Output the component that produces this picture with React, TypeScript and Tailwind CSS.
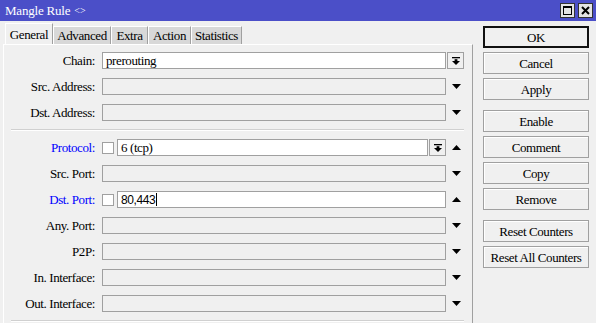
import React from 'react';

const DownArrow: React.FC = () => (
  <svg width="9" height="5" viewBox="0 0 9 5" className="block">
    <polygon points="0,0 9,0 4.5,5" fill="#000" />
  </svg>
);

const UpArrow: React.FC = () => (
  <svg width="9" height="5" viewBox="0 0 9 5" className="block">
    <polygon points="0,5 9,5 4.5,0" fill="#000" />
  </svg>
);

const DropButton: React.FC<{ className?: string }> = ({ className = '' }) => (
  <div
    className={`flex h-[17px] w-[17px] items-center justify-center border border-[#a0a0a0] bg-[#f0f0f0] ${className}`}
  >
    <svg width="8" height="8" viewBox="0 0 8 8" className="block">
      <rect x="0" y="0" width="8" height="1.3" fill="#000" />
      <rect x="2.6" y="2.2" width="2.8" height="2" fill="#000" />
      <polygon points="0,4 8,4 4,8" fill="#000" />
    </svg>
  </div>
);

type RowProps = {
  label: string;
  blue?: boolean;
  children: React.ReactNode;
  trail?: React.ReactNode;
};

const Row: React.FC<RowProps> = ({ label, blue, children, trail }) => (
  <div className="flex h-[17px] items-center">
    <div
      className={`w-[91px] text-right text-[13px] leading-none tracking-[-0.4px] ${blue ? 'text-[#0000ff]' : 'text-black'}`}
    >
      {label}
    </div>
    <div className="ml-[7px] flex h-[17px] w-[344px] items-center">{children}</div>
    <div className="flex h-[17px] w-[26px] items-center">{trail}</div>
  </div>
);

const Field: React.FC<{ value?: string; enabled?: boolean; sans?: boolean; cursor?: boolean }> = ({
  value,
  enabled,
  sans,
  cursor,
}) => (
  <div
    className={`flex h-[17px] flex-1 items-center border border-[#a0a0a0] pl-[3px] text-[13px] leading-none ${enabled ? 'bg-white' : 'bg-[#f0f0f0]'}`}
  >
    {value && (
      <span
        className={
          sans
            ? "font-['Liberation_Sans',Arial,sans-serif] text-[12px] tracking-[-0.4px]"
            : 'tracking-[-0.4px]'
        }
      >
        {value}
      </span>
    )}
    {cursor && <span className="ml-[1px] h-[13px] w-px bg-black" />}
  </div>
);

const Check: React.FC = () => (
  <div className="mr-[3px] h-[12px] w-[12px] shrink-0 border border-[#a0a0a0] bg-white" />
);

const Separator: React.FC = () => (
  <div className="flex h-[18px] items-center pl-[7px] pr-[8px]">
    <div className="h-[2px] w-full border-t border-[#d0d0d0] border-b border-b-white" />
  </div>
);

const Btn: React.FC<{ label: string; primary?: boolean }> = ({ label, primary }) => (
  <div
    className={`flex h-[22px] w-[106px] items-center justify-center bg-[#f0f0f0] text-[13px] leading-none tracking-[-0.4px] ${primary ? 'border-2 border-[#111]' : 'border border-[#a0a0a0] shadow-[inset_1px_1px_0_#ffffff]'}`}
  >
    {label}
  </div>
);

const tabs = ['Advanced', 'Extra', 'Action', 'Statistics'];
const tabWidths = ['w-[58px]', 'w-[37px]', 'w-[43px]', 'w-[51px]'];

export default function App() {
  return (
    <div className="h-[323px] w-[596px] overflow-hidden bg-[#f0f0f0] font-['Liberation_Serif','Times_New_Roman',serif] text-black">
      {/* title bar */}
      <div className="flex h-[21px] items-center bg-[#4b4fc8] pl-[5px] pr-[3px] text-white">
        <span className="text-[13px] leading-none tracking-[-0.2px]">Mangle Rule</span>
        <span className="ml-[4px] text-[10px] leading-none">&lt;&gt;</span>
        <div className="ml-auto flex items-center gap-[3px]">
          <div className="flex h-[15px] w-[15px] items-center justify-center border border-[#333] bg-[#e4e4e4]">
            <div className="h-[9px] w-[9px] border border-t-2 border-black" />
          </div>
          <div className="flex h-[15px] w-[15px] items-center justify-center border border-[#333] bg-[#e4e4e4]">
            <svg width="9" height="9" viewBox="0 0 9 9" className="block">
              <path d="M1 1 L8 8 M8 1 L1 8" stroke="#000" strokeWidth="2" />
            </svg>
          </div>
        </div>
      </div>

      <div className="flex">
        {/* left: tabs and form */}
        <div className="ml-[3px] w-[470px]">
          <div className="flex h-[23px] items-end pl-[2px]">
            <div className="flex h-[21px] w-[48px] items-center justify-center border-l border-t border-white border-r border-r-[#a0a0a0] bg-[#f0f0f0] text-[13px] leading-none tracking-[-0.4px]">
              General
            </div>
            {tabs.map((t, i) => (
              <div
                key={t}
                className={`flex h-[18px] ${tabWidths[i]} items-center justify-center border-l border-t border-white border-r border-r-[#a0a0a0] bg-[#d8d8d8] text-[13px] leading-none tracking-[-0.4px]`}
              >
                {t}
              </div>
            ))}
          </div>

          <div className="h-[290px] border-l border-t border-white border-r border-r-[#a0a0a0] pt-[7px]">
            <div className="flex flex-col gap-[9px]">
              <Row label="Chain:" trail={<DropButton className="ml-[1px]" />}>
                <Field value="prerouting" enabled />
              </Row>
              <Row label="Src. Address:" trail={<div className="ml-[6px]"><DownArrow /></div>}>
                <Field />
              </Row>
              <Row label="Dst. Address:" trail={<div className="ml-[6px]"><DownArrow /></div>}>
                <Field />
              </Row>
            </div>

            <Separator />

            <div className="flex flex-col gap-[9px]">
              <Row label="Protocol:" blue trail={<div className="ml-[6px]"><UpArrow /></div>}>
                <Check />
                <Field value="6 (tcp)" enabled />
                <DropButton className="ml-[1px]" />
              </Row>
              <Row label="Src. Port:" trail={<div className="ml-[6px]"><DownArrow /></div>}>
                <Field />
              </Row>
              <Row label="Dst. Port:" blue trail={<div className="ml-[6px]"><UpArrow /></div>}>
                <Check />
                <Field value="80,443" enabled sans cursor />
              </Row>
              <Row label="Any. Port:" trail={<div className="ml-[6px]"><DownArrow /></div>}>
                <Field />
              </Row>
              <Row label="P2P:" trail={<div className="ml-[6px]"><DownArrow /></div>}>
                <Field />
              </Row>
              <Row label="In. Interface:" trail={<div className="ml-[6px]"><DownArrow /></div>}>
                <Field />
              </Row>
              <Row label="Out. Interface:" trail={<div className="ml-[6px]"><DownArrow /></div>}>
                <Field />
              </Row>
            </div>

            <Separator />
          </div>
        </div>

        {/* right: buttons */}
        <div className="ml-[10px] flex flex-col pt-[5px]">
          <div className="flex flex-col gap-[4px]">
            <Btn label="OK" primary />
            <Btn label="Cancel" />
            <Btn label="Apply" />
          </div>
          <div className="mt-[10px] flex flex-col gap-[4px]">
            <Btn label="Enable" />
            <Btn label="Comment" />
            <Btn label="Copy" />
            <Btn label="Remove" />
          </div>
          <div className="mt-[10px] flex flex-col gap-[4px]">
            <Btn label="Reset Counters" />
            <Btn label="Reset All Counters" />
          </div>
        </div>
      </div>
    </div>
  );
}
